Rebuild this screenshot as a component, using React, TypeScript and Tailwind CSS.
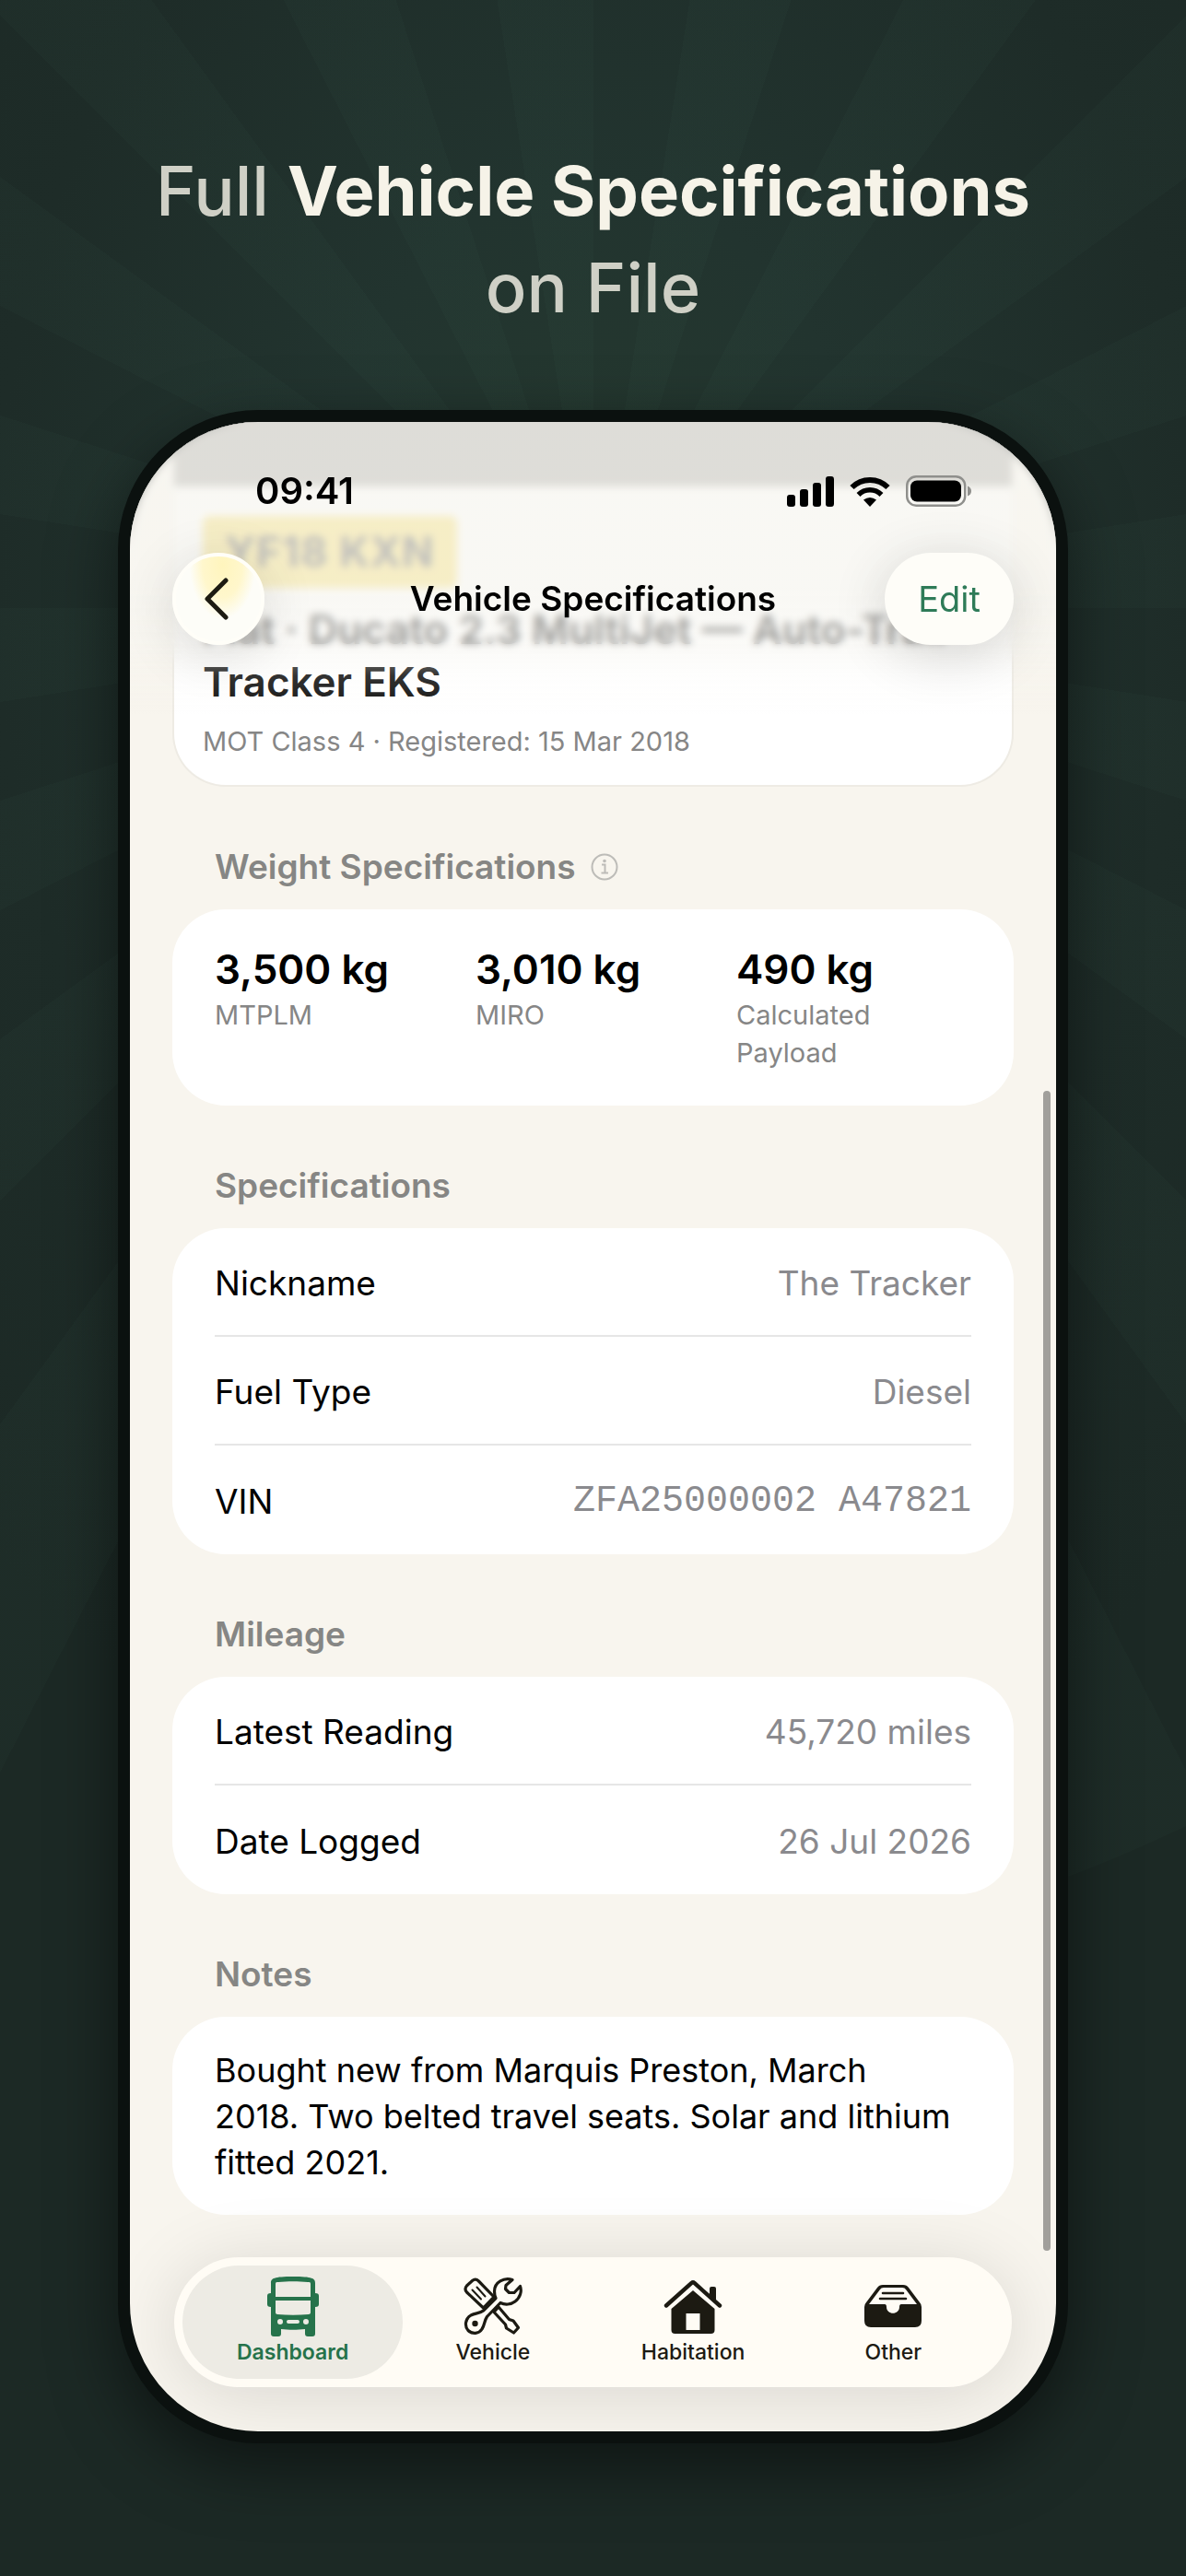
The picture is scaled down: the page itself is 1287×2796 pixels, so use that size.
import { ReactNode } from "react";
import clsx from "clsx";

const weights = [
  { value: "3,500 kg", label: "MTPLM" },
  { value: "3,010 kg", label: "MIRO" },
  { value: "490 kg", label: "Calculated Payload" },
];

const sections = [
  {
    title: "Specifications",
    rows: [
      { label: "Nickname", value: "The Tracker" },
      { label: "Fuel Type", value: "Diesel" },
      { label: "VIN", value: "ZFA25000002 A47821", mono: true },
    ],
  },
  {
    title: "Mileage",
    rows: [
      { label: "Latest Reading", value: "45,720 miles" },
      { label: "Date Logged", value: "26 Jul 2026" },
    ],
  },
];

const BusIcon = () => (
  <svg viewBox="0 0 56 66" className="h-[66px] w-[56px]" fill="currentColor">
    <path
      fillRule="evenodd"
      d="M4 8C4 3 7 1 28 1s24 2 24 7v11c3 0 4 1 4 3v9c0 2-1 3-4 3v29c0 2-1 3-3 3h-5c-2 0-3-1-3-3v-5c-8 1-18 1-26 0v5c0 2-1 3-3 3H7c-2 0-3-1-3-3V34c-3 0-4-1-4-3v-9c0-2 1-3 4-3zm5 1v14h38V9c0-2-1-2-3-2-10-1-22-1-32 0-2 0-3 0-3 2zm0 18v13c0 1 1 2 2 2 11 1 23 1 34 0 1 0 2-1 2-2V27zm5 20a3 3 0 1 0 0 6 3 3 0 0 0 0-6zm28 0a3 3 0 1 0 0 6 3 3 0 0 0 0-6zm-19 1a2 2 0 0 0 0 4h10a2 2 0 0 0 0-4z"
    />
  </svg>
);

const ToolsIcon = () => (
  <svg
    viewBox="0 0 64 64"
    className="h-[64px] w-[64px]"
    fill="none"
    stroke="currentColor"
    strokeWidth="3.2"
    strokeLinejoin="round"
    strokeLinecap="round"
  >
    {/* screwdriver */}
    <path d="M9.500 4.500q3.500-3 7 .5L33 22 21.500 34 3.500 17q-3-3.500 0-7z" />
    <path d="M9.500 14.500l9.500 10M14.500 11.500l9 10" strokeWidth="2" />
    <path d="M33 38.500l12.500 13.500 1 4 8 5 5-5.500-5.500-7.500-4.500-1.500L38 33z" />
    {/* wrench */}
    <path
      fill="#fffcf5"
      d="M53 3.500C44 .500 33.500 6 33.500 16q0 4 1.500 7.500L21.500 37C18 40 13 39.500 8 42 1.500 46 1 54 5 58.500c4.500 4.500 12 3.500 15-1.500 3-4.500 2.500-9 5.500-13.500L40 28.500c5 2.500 11.500 2 16-1.500 5.500-4 7.500-11 5.500-16.500L55 17.500l-5.500 0-4-4 .5-4z"
    />
    <circle cx="12.500" cy="51" r="3.200" fill="currentColor" stroke="none" />
  </svg>
);

const HouseIcon = () => (
  <svg viewBox="0 0 64 60" className="h-[60px] w-[64px]" fill="currentColor">
    <path
      d="M3 29.500L30.500 5q1.500-1.500 3 0L61 29.500"
      fill="none"
      stroke="currentColor"
      strokeWidth="4.400"
      strokeLinecap="round"
    />
    <path d="M50 11q0-2 2-2h3q2 0 2 2v14l-7-6z" />
    <path
      fillRule="evenodd"
      d="M32 13l23.500 20v23q0 4-4 4h-39q-4 0-4-4V33zM24.500 38v18h15V38z"
    />
  </svg>
);

const TrayIcon = () => (
  <svg viewBox="0 0 62 48" className="h-[48px] w-[62px]" fill="currentColor">
    <path
      fillRule="evenodd"
      d="M14 4q2-3 6-3h22q4 0 6 3l12 16q2 2 2 5v15q0 7-7 7H7q-7 0-7-7V25q0-3 2-5zM5 22h17q2 0 2 3c0 9 14 9 14 0q0-3 2-3h17L45 6q-1-2-4-2H21q-3 0-4 2z"
    />
    <path
      d="M20 10h22M17 16h28"
      stroke="currentColor"
      strokeWidth="2.600"
      strokeLinecap="round"
    />
  </svg>
);

const SignalIcon = () => (
  <svg viewBox="0 0 51 33" className="h-[33px] w-[51px]">
    <rect x="0" y="20" width="9" height="13" rx="3" />
    <rect x="14" y="14" width="9" height="19" rx="3" />
    <rect x="28" y="7" width="9" height="26" rx="3" />
    <rect x="42" y="0" width="9" height="33" rx="3" />
  </svg>
);

const WifiIcon = () => (
  <svg viewBox="0 0 44 33" className="h-[33px] w-[44px]">
    <g fill="none" stroke="black">
      <path d="M2.500 12a27.500 27.500 0 0 1 39 0" strokeWidth="6" />
      <path d="M9.500 20a17.500 17.500 0 0 1 25 0" strokeWidth="5.500" />
    </g>
    <path d="M22 33l-7-7.500q7-5 14 0z" />
  </svg>
);

const BatteryIcon = () => (
  <svg viewBox="0 0 71 34" className="h-[34px] w-[71px]">
    <rect
      x="1.200"
      y="1.200"
      width="63"
      height="31.500"
      rx="10"
      fill="none"
      stroke="#8f8f8c"
      strokeWidth="2.400"
    />
    <rect x="5" y="5.500" width="55" height="23" rx="7" />
    <path d="M67 11.500q4 1.500 4 5.500t-4 5.500z" fill="#8f8f8c" />
  </svg>
);

const InfoIcon = () => (
  <svg
    viewBox="0 0 30 30"
    className="h-[30px] w-[30px]"
    fill="none"
    stroke="#bdbcb8"
    strokeWidth="2"
  >
    <circle cx="15" cy="15" r="13.500" />
    <path d="M12 12.500h3.500V21M11.500 21.500h7.500" />
    <circle cx="15" cy="8.500" r="1.800" fill="#bdbcb8" stroke="none" />
  </svg>
);

const tabs = [
  { label: "Dashboard", icon: <BusIcon />, active: true },
  { label: "Vehicle", icon: <ToolsIcon /> },
  { label: "Habitation", icon: <HouseIcon /> },
  { label: "Other", icon: <TrayIcon /> },
];

const Heading = ({ children }: { children: ReactNode }) => (
  <h2 className="flex h-[133px] items-end gap-4 px-[46px] pb-[22px] text-[37px] leading-[48px] font-semibold text-[#868684]">
    {children}
  </h2>
);

const Card = ({ children }: { children: ReactNode }) => (
  <div className="rounded-[58px] bg-white px-[46px]">{children}</div>
);

const VehicleCard = () => (
  <section className="rounded-b-[58px] border-x-2 border-b-2 border-[#eeebe4] bg-white">
    <div className="h-[70px] bg-[#868480]" />
    <div className="px-[31px] pt-8 pb-[27px]">
      <span className="inline-block rounded-lg bg-[#f2cf30] px-6 align-top text-[45px] leading-[78px] font-bold tracking-wide text-black">
        YF18 KXN
      </span>
      <p className="mt-[17px] text-[44px] leading-[57px] font-semibold text-[#111]">
        Fiat · Ducato 2.3 MultiJet — Auto-Trail Tracker EKS
      </p>
      <p className="mt-[15px] text-[29px] leading-[41px] text-[#868686]">
        MOT Class 4 · Registered: 15 Mar 2018
      </p>
    </div>
  </section>
);

const TopBar = () => (
  <div className="absolute inset-x-0 top-0">
    <div className="absolute inset-x-0 top-0 h-[264px] mask-b-from-90% backdrop-blur-[4px]" />
    <div className="absolute inset-x-0 top-0 h-[320px] bg-[linear-gradient(rgb(247_246_241/0.78)_56%,rgb(247_246_241/0.55)_76%,rgb(247_246_241/0.15)_86%,rgb(247_246_241/0)_100%)]" />
    <div className="relative px-[46px] pt-[52px]">
      <div className="flex h-[46px] items-center justify-between pr-[46px] pl-[90px]">
        <time className="text-[40px] leading-[46px] font-semibold">09:41</time>
        <div className="flex items-center gap-[17px]">
          <SignalIcon />
          <WifiIcon />
          <BatteryIcon />
        </div>
      </div>
      <nav className="mt-11 grid grid-cols-[140px_1fr_140px] items-center">
        <button
          aria-label="Back"
          className="flex size-[100px] items-center justify-center rounded-full border-4 border-[#fffef8] bg-[radial-gradient(ellipse_at_55%_10%,#fff5bd_0%,#fff7cc_30%,#fdfdf8_50%)] shadow-[0_10px_60px_rgba(0,0,0,0.14)]"
        >
          <svg
            viewBox="0 0 28 46"
            className="mr-1 h-[46px] w-[28px]"
            fill="none"
            stroke="#1d1b12"
            strokeWidth="5"
            strokeLinecap="round"
            strokeLinejoin="round"
          >
            <path d="M24 3L4 23l20 20" />
          </svg>
        </button>
        <h2 className="text-center text-[37px] leading-[48px] font-semibold">
          Vehicle Specifications
        </h2>
        <button className="h-[100px] rounded-full bg-[#fefdf8] text-[38px] text-[#2e7b58] shadow-[0_10px_60px_rgba(0,0,0,0.16)]">
          Edit
        </button>
      </nav>
    </div>
  </div>
);

const TabBar = () => (
  <nav className="absolute inset-x-12 bottom-12 grid grid-cols-4 rounded-full bg-[#fffcf5] px-5 py-[9px] shadow-[0_8px_80px_rgba(0,0,0,0.13)]">
    {tabs.map((tab) => (
      <a
        key={tab.label}
        href="#"
        className={clsx(
          "-mx-[11px] flex flex-col items-center rounded-full pt-[11px] pb-[15px] text-[23px] leading-7",
          tab.active
            ? "bg-[#edebe4] font-semibold text-[#26734b]"
            : "font-medium text-[#1c1a12]",
        )}
      >
        <span className="flex h-[66px] items-center">{tab.icon}</span>
        <span className="mt-[3px]">{tab.label}</span>
      </a>
    ))}
  </nav>
);

const App = () => {
  return (
    <main className="relative flex min-h-screen flex-col overflow-hidden bg-[#1c2925] bg-[radial-gradient(1000px_1400px_at_50%_620px,#25392f_0%,#22342f_30%,#1e2c28_65%,#1c2925_100%)] px-32 pb-[142px] font-[Inter,sans-serif] text-black">
      {/* sunburst behind the phone */}
      <div className="absolute -top-[810px] left-1/2 size-[2940px] -translate-x-1/2 rounded-full bg-[repeating-conic-gradient(transparent_0deg_9deg,rgba(130,220,180,0.018)_9deg_18deg)]" />

      <h1 className="relative pt-[155px] pb-[80px] text-center text-[74px] leading-[105px] font-medium text-[#cfd0c6]">
        Full <b className="font-bold text-[#f6f3e8]">Vehicle Specifications</b>
        <br />
        on File
      </h1>

      <div className="relative overflow-hidden rounded-[152px] border-[13px] border-[#0b110f] bg-[#f8f5ee] shadow-[0_24px_70px_rgba(0,0,0,0.5)]">
        <div className="px-[46px] pb-[235px]">
          <VehicleCard />

          <Heading>
            Weight Specifications
            <button aria-label="About weights" className="mb-[9px]">
              <InfoIcon />
            </button>
          </Heading>
          <Card>
            <dl className="grid grid-cols-3 gap-x-7 pt-10 pb-[37px]">
              {weights.map((weight) => (
                <div key={weight.label} className="flex flex-col-reverse justify-end">
                  <dt className="mt-1 text-[29px] leading-[41px] text-[#868686]">
                    {weight.label}
                  </dt>
                  <dd className="text-[44px] leading-[50px] font-semibold">
                    {weight.value}
                  </dd>
                </div>
              ))}
            </dl>
          </Card>

          {sections.map((section) => (
            <section key={section.title}>
              <Heading>{section.title}</Heading>
              <Card>
                <dl className="divide-y-2 divide-[#e6e6e6]">
                  {section.rows.map((row) => (
                    <div
                      key={row.label}
                      className="flex h-[118px] items-center justify-between pt-1 text-[37px]"
                    >
                      <dt>{row.label}</dt>
                      <dd
                        className={clsx(
                          "text-[#8a8a8e]",
                          row.mono && "font-['Liberation_Mono',monospace] text-[40px]",
                        )}
                      >
                        {row.value}
                      </dd>
                    </div>
                  ))}
                </dl>
              </Card>
            </section>
          ))}

          <Heading>Notes</Heading>
          <Card>
            <p className="pt-[33px] pb-8 text-[36px] leading-[50px]">
              Bought new from Marquis Preston, March
              <br />
              2018. Two belted travel seats. Solar and lithium fitted 2021.
            </p>
          </Card>
        </div>

        <div className="absolute top-[726px] right-[6px] bottom-[196px] w-2 rounded-full bg-[#a19f9b]" />
        <TopBar />
        <TabBar />
      </div>
    </main>
  );
};

export default App;
